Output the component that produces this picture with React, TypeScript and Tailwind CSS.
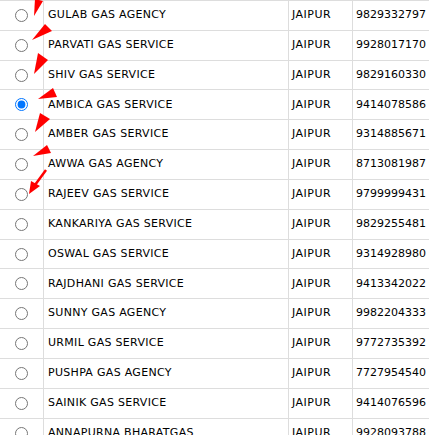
import React from "react";

const rows = [
  ["GULAB GAS AGENCY", "9829332797"],
  ["PARVATI GAS SERVICE", "9928017170"],
  ["SHIV GAS SERVICE", "9829160330"],
  ["AMBICA GAS SERVICE", "9414078586"],
  ["AMBER GAS SERVICE", "9314885671"],
  ["AWWA GAS AGENCY", "8713081987"],
  ["RAJEEV GAS SERVICE", "9799999431"],
  ["KANKARIYA GAS SERVICE", "9829255481"],
  ["OSWAL GAS SERVICE", "9314928980"],
  ["RAJDHANI GAS SERVICE", "9413342022"],
  ["SUNNY GAS AGENCY", "9982204333"],
  ["URMIL GAS SERVICE", "9772735392"],
  ["PUSHPA GAS AGENCY", "7727954540"],
  ["SAINIK GAS SERVICE", "9414076596"],
  ["ANNAPURNA BHARATGAS", "9928093788"],
];

// red pointer marks drawn on top of the first rows
function Arrows() {
  return (
    <svg
      className="pointer-events-none absolute left-0 top-0"
      width="70"
      height="200"
      viewBox="0 0 70 200"
    >
      <g fill="#ff0000">
        <polygon points="34,16 35,-1 43,1" />
        <polygon points="32,40 45,24 52,31" />
        <polygon points="34,74 38,53 48,60" />
        <polygon points="38,99 53,88 57,97" />
        <polygon points="35,132 40,113 50,119" />
        <polygon points="33,156 47,145 51,153" />
        <polygon points="29,194 31,181 40,186" />
      </g>
      <line x1="46" y1="170" x2="35" y2="185" stroke="#ff0000" strokeWidth="2.5" />
    </svg>
  );
}

export default function App() {
  return (
    <div className="relative h-[435px] w-[429px] overflow-hidden bg-white font-['DejaVu_Sans',Verdana,sans-serif] text-[11px] text-black">
      <div className="border-t border-[#dddddd]">
        {rows.map(([name, phone], i) => (
          <div
            key={name}
            className="grid h-[29.83px] grid-cols-[44px_245px_64px_1fr] border-b border-[#dddddd]"
          >
            <div className="flex items-center justify-center border-r border-[#dddddd]">
              <input
                type="radio"
                name="agency"
                defaultChecked={i === 3}
                className="m-0 h-[13px] w-[13px]"
              />
            </div>
            <div className="flex items-center border-r border-[#dddddd] pl-[4px] tracking-[0.3px]">
              {name}
            </div>
            <div className="flex items-center border-r border-[#dddddd] pl-[3px] tracking-[0.5px]">
              JAIPUR
            </div>
            <div className="flex items-center pl-[3px]">{phone}</div>
          </div>
        ))}
      </div>
      <Arrows />
    </div>
  );
}
